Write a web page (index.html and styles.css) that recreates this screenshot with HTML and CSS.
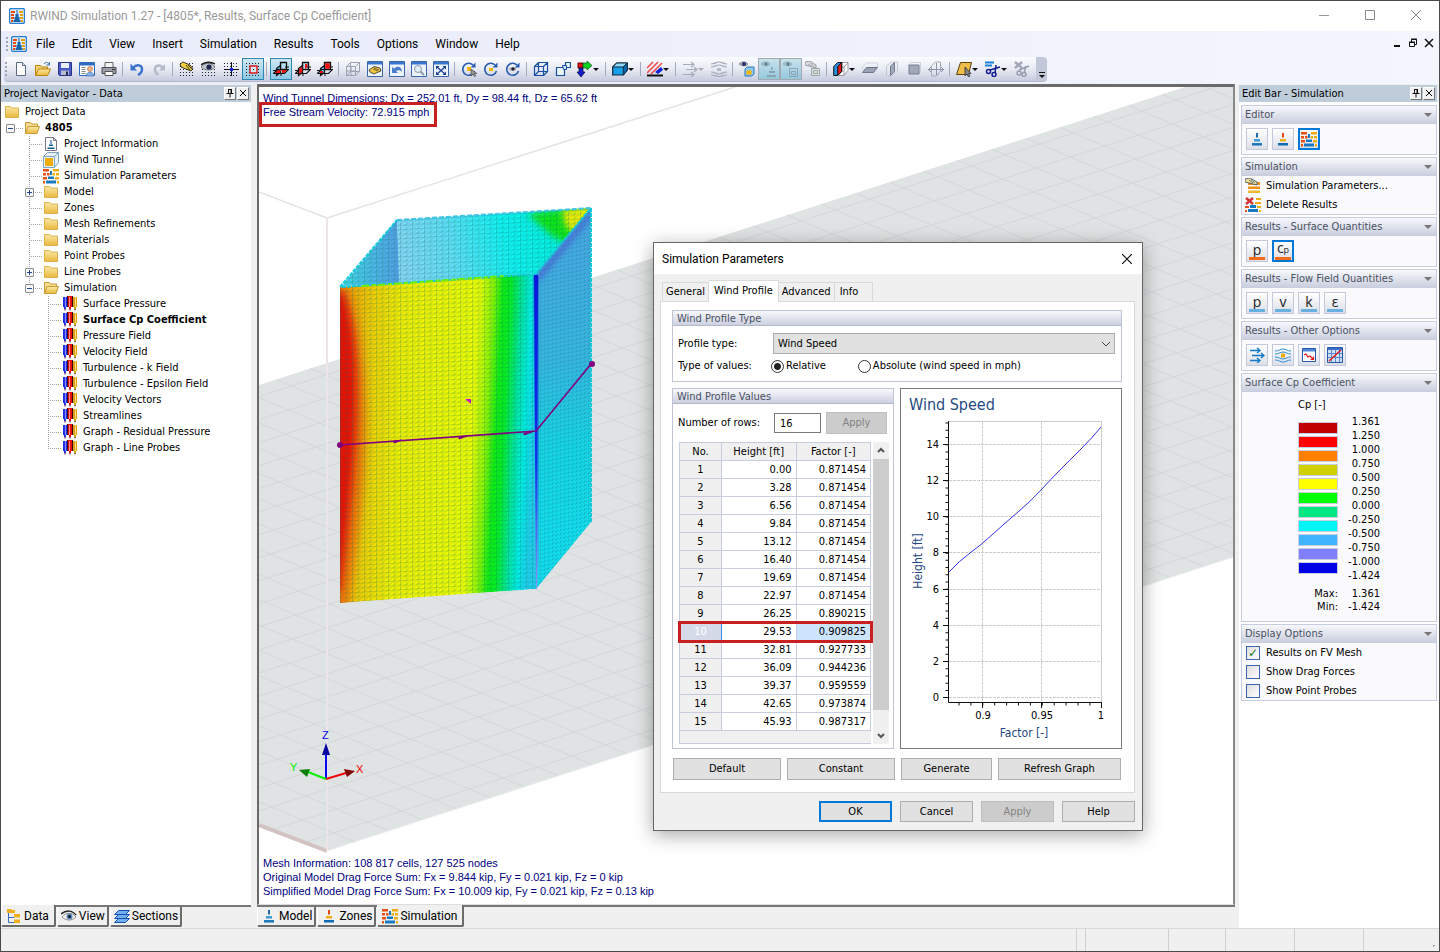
FILE: index.html
```html
<!DOCTYPE html>
<html lang="en">
<head>
	<meta charset="UTF-8">
	<title>RWIND Simulation 1.27</title>
	<link rel="stylesheet" href="styles.css">
</head>
<body>
	<!-- icon sprite -->
	<svg class="sprite" aria-hidden="true">
		<defs>
			<linearGradient id="g-folder" x1="0" y1="0" x2="0" y2="1"><stop offset="0" stop-color="#fdeaa8"/><stop offset="1" stop-color="#e8b83c"/></linearGradient>
			<linearGradient id="g-blue" x1="0" y1="0" x2="0" y2="1"><stop offset="0" stop-color="#4aa8e0"/><stop offset="1" stop-color="#0f6cb4"/></linearGradient>
		</defs>
		<symbol id="i-app" viewBox="0 0 16 16"><rect x=".5" y=".5" width="15" height="15" rx="2" fill="#dcecfa" stroke="#2a7fd0" stroke-width="1.400"/><path d="M2 3h4v2H2zM2 6h3v2H2zM2 9h3v2H2zM2 12h2v2H2z" fill="#e64a10"/><path d="M10 3h4v2h-4zM11 6h3v2h-3zM11 9h3v2h-3zM12 12h2v2h-2z" fill="#e8a000"/><path d="M7.500 2h1v4h1v3h1v3h1v2h-7v-2h1V9h1V6h1z" fill="#1565a8"/></symbol>
		<symbol id="i-new" viewBox="0 0 16 16"><path d="M3.500 1.500h6l3 3v10h-9z" fill="#fff" stroke="#5a6a80"/><path d="M9.500 1.500v3h3" fill="#dde6f0" stroke="#5a6a80"/></symbol>
		<symbol id="i-openfile" viewBox="0 0 16 16"><path d="M.5 14V4.500h5l1 1.500h6v3" fill="#f5d273" stroke="#b8860b"/><path d="M.5 14.500l3-6.500h12l-3 6.500z" fill="url(#g-folder)" stroke="#b8860b"/><path d="M9 3c2-2.500 4-2 5 .500M14.500 1v3h-3" fill="none" stroke="#3a6ea5"/></symbol>
		<symbol id="i-save" viewBox="0 0 16 16"><path d="M1.500 1.500h13v13h-12l-1-1z" fill="#4858c8" stroke="#2a3480"/><path d="M4 2h8v5H4z" fill="#e8eefa"/><path d="M4 9.500h8V14H4z" fill="#b8bccc"/><path d="M9 10.500h2V14H9z" fill="#222a60"/></symbol>
		<symbol id="i-props" viewBox="0 0 16 16"><path d="M.5 1.500h15v13H.5z" fill="#fff" stroke="#2e6ac0"/><path d="M1 2h14v2.500H1z" fill="#2e6ac0"/><path d="M2.500 6.500h4M2.500 8.500h4M2.500 10.500h4M2.500 12.500h4" stroke="#888"/><circle cx="11" cy="8" r="2.500" fill="#f2b48a" stroke="#a4572c" stroke-width=".6"/><path d="M7 15c0-5 8-5 8 0z" fill="#7fb0e8" stroke="#34609c" stroke-width=".6"/></symbol>
		<symbol id="i-print" viewBox="0 0 16 16"><path d="M4 1.500h8V7H4z" fill="#f4f4f4" stroke="#666"/><path d="M1 6.500h14v6H1z" fill="#9a9da4" stroke="#4a4d55"/><path d="M4 10.500h8v4H4z" fill="#fff" stroke="#555"/><path d="M11 8.500h3" stroke="#333"/></symbol>
		<symbol id="i-undo" viewBox="0 0 16 16"><path d="M4 7c4-4.500 9.500-3 9 2-.3 2.500-1.800 4-4 5" fill="none" stroke="#3a72d0" stroke-width="2.400"/><path d="M1.500 2.500v7h6.500z" fill="#3a72d0"/></symbol>
		<symbol id="i-redo" viewBox="0 0 16 16"><path d="M12 6.500C8 3 3.500 4.500 4 9c.2 2 1.500 3.500 3.500 4.500" fill="none" stroke="#b4bac8" stroke-width="2.400"/><path d="M14 3v6.500H8z" fill="#b4bac8"/></symbol>
		<symbol id="i-dots" viewBox="0 0 16 16"><path d="M1 2.500h15M1 5.500h15M1 8.500h15M1 11.500h15M1 14.500h15" stroke="#223" stroke-dasharray="1 2"/></symbol>
		<symbol id="i-snap" viewBox="0 0 16 16"><use href="#i-dots"/><path d="M1 3l3-2 7 3 3 4-2 2-5-2-5-2z" fill="#f0d040" stroke="#111" stroke-width=".8"/><path d="M9 4l4 4M7 4l4 5" stroke="#111" stroke-width=".8"/></symbol>
		<symbol id="i-snapeye" viewBox="0 0 16 16"><use href="#i-dots"/><path d="M0 6c4-5 11-5 14 0-3 4-10 4-14 0z" fill="#c4c8cc" stroke="#555" stroke-width=".7"/><path d="M0 4c4-3.500 10-3.500 14-1" stroke="#222" stroke-width="1.400" fill="none"/><circle cx="8" cy="6" r="2.600" fill="#1c2450"/></symbol>
		<symbol id="i-snapcross" viewBox="0 0 16 16"><use href="#i-dots"/><path d="M8.500 1v14M1 8.500h15" stroke="#111"/><path d="M7 7h3v3H7z" fill="#1020e0"/></symbol>
		<symbol id="i-snapbox" viewBox="0 0 16 16"><use href="#i-dots"/><path d="M5 5h7v7H5z" fill="#d2e8f4" stroke="#e01818" stroke-width="1.400"/><path d="M8 8h1v1H8z" fill="#111"/></symbol>
		<symbol id="i-planes" viewBox="0 0 16 16"><path d="M7.500 1.500h6v7h-6z" fill="#b8e0f4" stroke="#111" stroke-width="1.300"/><path d="M3.500 7.500l4-3v7l-4 3z" fill="#60c0ec" stroke="#111" stroke-width="1.300"/><path d="M.5 12.500l4-4h11l-4 4z" fill="none" stroke="#111" stroke-width="1.200"/><path d="M0 9.500h4M12 6h4M8 12v3" stroke="#111"/></symbol>
		<symbol id="i-plane1" viewBox="0 0 16 16"><use href="#i-planes"/><path d="M2 12l3-3h3l-1 3zM9 9h5l-3 3H9z" fill="#f01010"/></symbol>
		<symbol id="i-plane2" viewBox="0 0 16 16"><use href="#i-planes"/><path d="M4.200 8l3-2.200V11l-3 2.300zM10 3h2.500v3L10 8z" fill="#f01010"/></symbol>
		<symbol id="i-plane3" viewBox="0 0 16 16"><use href="#i-planes"/><path d="M8.200 2.200h4.600v5.600H8.200zM3 10h3v2H3z" fill="#f01010"/></symbol>
		<symbol id="i-wiregrey" viewBox="0 0 16 16"><path d="M1.500 5.500h9v9h-9zM5.500 1.500h9v9h-9zM1.500 5.500l4-4M10.500 5.500l4-4M1.500 14.500l4-4M10.500 14.500l4-4M1.500 10h9M6 5.500v9" fill="none" stroke="#9ba2b2"/></symbol>
		<symbol id="i-wire" viewBox="0 0 16 16"><path d="M1.500 5.500h9v9h-9zM5.500 1.500h9v9h-9zM1.500 5.500l4-4M10.500 5.500l4-4M1.500 14.500l4-4M10.500 14.500l4-4" fill="none" stroke="#1a4fa0" stroke-width="1.200"/></symbol>
		<symbol id="i-win" viewBox="0 0 16 16"><path d="M.5.500h15v15H.5z" fill="#eef4fc" stroke="#3c66a8"/><path d="M1 1h14v2.500H1z" fill="#3a78d0"/></symbol>
		<symbol id="i-winhand" viewBox="0 0 16 16"><use href="#i-win"/><path d="M2 9l5-3.500 6 1.500 1 3-5 2-2 1-4-2z" fill="#f0c840" stroke="#2a2a2a" stroke-width=".8"/><path d="M6 8l5 2M7 7l5 2" stroke="#2a2a2a" stroke-width=".6"/></symbol>
		<symbol id="i-winback" viewBox="0 0 16 16"><use href="#i-win"/><path d="M3 6v6h6l-2-2c2.500-1.500 4.500-1 6 1 0-5-4-7-8-3.500z" fill="#4c7cd0"/></symbol>
		<symbol id="i-winzoom" viewBox="0 0 16 16"><use href="#i-win"/><circle cx="7" cy="8" r="3.500" fill="#dff0f8" stroke="#9098a8"/><path d="M9.500 10.500l3.500 3.500" stroke="#9098a8" stroke-width="2"/></symbol>
		<symbol id="i-winfit" viewBox="0 0 16 16"><use href="#i-win"/><path d="M4 6l8 7M12 6l-8 7" stroke="#1a3f90" stroke-width="1.200"/><path d="M3 5h3.500L3 8.500zM13 5v3.500L9.500 5zM3 14v-3.500L6.500 14zM13 14H9.500l3.500-3.500z" fill="#1a3f90"/></symbol>
		<symbol id="i-rot" viewBox="0 0 16 16"><path d="M13.500 10A6 6 0 1 1 12 4" fill="none" stroke="#2a5cb0" stroke-width="1.600"/><path d="M14.500 1.500v5h-5z" fill="#2a5cb0"/></symbol>
		<symbol id="i-rot1" viewBox="0 0 16 16"><use href="#i-rot"/><path d="M6 6h4v4H6z" fill="#f5b400"/><path d="M10 8v7l2-2 1.500 2.500 1-.5-1-2.500h2.300z" fill="#999" stroke="#333" stroke-width=".6"/></symbol>
		<symbol id="i-rot2" viewBox="0 0 16 16"><use href="#i-rot"/><path d="M6 7h4v3H6z" fill="#f5b400"/></symbol>
		<symbol id="i-rot3" viewBox="0 0 16 16"><use href="#i-rot"/><path d="M3.500 8c2-2.500 6-2.500 8 0-2 2-6 2-8 0z" fill="#aab"/><circle cx="8" cy="8" r="1.700" fill="#223"/></symbol>
		<symbol id="i-boxes" viewBox="0 0 16 16"><path d="M1.500 6.500h8v8h-8zM10.500 1.500h5v5h-5z" fill="#eaf4fc" stroke="#1a4fa0" stroke-width="1.200"/><path d="M7.500 4.500h4v4h-3z" fill="#cfe8f8" stroke="#1a4fa0"/></symbol>
		<symbol id="i-axes" viewBox="0 0 16 16"><path d="M1 2h5v5H1z" fill="#e01010" stroke="#600"/><path d="M6 2h4V0l5 4.500L10 9V7H6z" fill="#10d020" stroke="#052" stroke-width=".7"/><path d="M2 7h4v4h2l-4 5-4-5h2z" fill="#1020d0" stroke="#003" stroke-width=".7"/></symbol>
		<symbol id="i-cube" viewBox="0 0 16 16"><path d="M.7 6l4-4h10.600v7l-4 5H.700z" fill="#1aa0e8" stroke="#10283c" stroke-width="1.200"/><path d="M.7 6h10.600l4-4H4.700z" fill="#8fd8fa" stroke="#10283c"/><path d="M11.300 6l4-4v7l-4 5z" fill="#0a68b0" stroke="#10283c"/></symbol>
		<symbol id="i-hatch" viewBox="0 0 16 16"><path d="M0 7l6-6M0 12L11 1M4 13L15 2" stroke="#f04848" stroke-width="1.500"/><path d="M8 11l6-5 2 3-5 4z" fill="#1020d8"/><path d="M0 14.500h16" stroke="#111" stroke-width="2"/></symbol>
		<symbol id="i-arrowsgrey" viewBox="0 0 16 16"><path d="M1 3.500h10M4 8.500h10M1 13.500h10M9 1l3 2.500L9 6M12 6l3 2.500-3 2.500M9 11l3 2.500L9 16" fill="none" stroke="#a4aab8" stroke-width="1.200"/></symbol>
		<symbol id="i-flowgrey" viewBox="0 0 16 16"><path d="M0 3c4 0 5-2 8-2s4 2 8 2M0 6c4 0 5-2 8-2s4 2 8 2M0 11c4 0 5 2 8 2s4-2 8-2M0 14c4 0 5 1.500 8 1.500s4-1.500 8-1.500" fill="none" stroke="#a4aab8" stroke-width="1.200"/><path d="M6 7h4v3H6z" fill="#b4bac4"/></symbol>
		<symbol id="i-eyebox" viewBox="0 0 16 16"><path d="M0 3c3-3 7-2.500 9 0-2 2.500-6 2.500-9 0z" fill="#bbb" stroke="#667" stroke-width=".7"/><circle cx="5" cy="3" r="2" fill="#223070"/><path d="M6 8l2-2h7v7l-2 2H6z" fill="#8fc8f0" stroke="#2a78b8"/><path d="M7.500 9.500h5v4h-5z" fill="#f5b400"/></symbol>
		<symbol id="i-eyegrey1" viewBox="0 0 16 16"><path d="M0 3c3-3 7-2.500 9 0-2 2.500-6 2.500-9 0z" fill="#9cc" stroke="#89a" stroke-width=".7"/><circle cx="5" cy="3" r="1.600" fill="#678"/><path d="M10 6h1.500v3H10zM8 10h6v2H8zM6 14h9v2H6z" fill="#8aa4b4"/></symbol>
		<symbol id="i-eyegrey2" viewBox="0 0 16 16"><path d="M0 3c3-3 7-2.500 9 0-2 2.500-6 2.500-9 0z" fill="#9cc" stroke="#89a" stroke-width=".7"/><circle cx="5" cy="3" r="1.600" fill="#678"/><path d="M6.500 7.500h8v8h-8zM8.500 10.500h4v3h-4z" fill="none" stroke="#8aa4b4"/></symbol>
		<symbol id="i-handgrey" viewBox="0 0 16 16"><path d="M0 1l5-1 6 4v3L4 5 0 4z" fill="#ddd" stroke="#889" stroke-width=".8"/><path d="M3 3l4 3M5 2l4 3" stroke="#889" stroke-width=".7"/><path d="M6.500 7.500h8v7h-8zM8.500 9.500h4v3h-4z" fill="#ddd" stroke="#9aa"/></symbol>
		<symbol id="i-clip" viewBox="0 0 16 16"><path d="M9 1.500h6v8l-4 5H6M11 14V6l4-4M11 6H9" fill="#fff" stroke="#999"/><path d="M.7 5.500l4-4h4v9l-4 4h-4z" fill="#2a90e0" stroke="#111"/><path d="M4.700 5.500l4-4v9l-4 4z" fill="#e81818" stroke="#111"/></symbol>
		<symbol id="i-flat" viewBox="0 0 16 16"><path d="M.5 11.500l4-5h11l-4 5z" fill="#9aa2b4" stroke="#6c7488"/><path d="M.5 9V6l4-4h11v4" fill="none" stroke="#ccd2dc"/></symbol>
		<symbol id="i-vert" viewBox="0 0 16 16"><path d="M2.500 5l5-4h6v9l-5 5h-6z" fill="none" stroke="#c2c8d2"/><path d="M6.500 5l4-3.500v9l-4 4z" fill="#a2aaba" stroke="#747c90"/></symbol>
		<symbol id="i-front" viewBox="0 0 16 16"><path d="M1.500 4.500l3-3h10v9l-3 3" fill="none" stroke="#ccd2dc"/><path d="M3 4h10v9H3z" fill="#a2aaba" stroke="#747c90"/></symbol>
		<symbol id="i-side" viewBox="0 0 16 16"><path d="M3.500 5l4-4h5v9l-4 5h-5z" fill="none" stroke="#a2aaba"/><path d="M0 8.500h16M3 6l-2.500 2.500L3 11M13 6l2.500 2.500L13 11M8.500 2v12" fill="none" stroke="#8a92a4"/></symbol>
		<symbol id="i-select" viewBox="0 0 16 16"><path d="M.5 13.500l4-12h11l-3 12z" fill="#eebc48" stroke="#5a4410"/><path d="M9 6v9l2-2 1.500 3 1.500-1-1.500-2.500H15z" fill="#888" stroke="#222" stroke-width=".7"/></symbol>
		<symbol id="i-cut" viewBox="0 0 16 16"><path d="M0 1.500h9M0 4.500h7" stroke="#1a80e0" stroke-width="1.800"/><path d="M5 9l10-3M10 12l1-8" stroke="#101a90" stroke-width="1.500"/><circle cx="3.500" cy="10.500" r="2" fill="none" stroke="#101a90" stroke-width="1.500"/><circle cx="9" cy="13.500" r="2" fill="none" stroke="#101a90" stroke-width="1.500"/></symbol>
		<symbol id="i-cutgrey" viewBox="0 0 16 16"><path d="M1 1l7 6M8 1L1 7" stroke="#a0a6b4" stroke-width="2.400"/><path d="M5 9l10-4M10 12l2-7" stroke="#969cac" stroke-width="1.500"/><circle cx="5" cy="12" r="2" fill="none" stroke="#969cac" stroke-width="1.500"/><circle cx="10" cy="13.500" r="2" fill="none" stroke="#969cac" stroke-width="1.500"/></symbol>
		<symbol id="i-folder" viewBox="0 0 16 16"><path d="M1.500 13.500v-11h5l1 1.500h7v9.500z" fill="url(#g-folder)" stroke="#dcb04c"/></symbol>
		<symbol id="i-folderopen" viewBox="0 0 16 16"><path d="M1.500 13.500v-11h5l1 1.500h6v3" fill="#f7dc90" stroke="#c89a38"/><path d="M1.500 13.500l2.500-7h11.500l-2.500 7z" fill="url(#g-folder)" stroke="#c89a38"/></symbol>
		<symbol id="i-info" viewBox="0 0 16 16"><path d="M2.500 1.500h8l3 3v10h-11z" fill="#fff" stroke="#778"/><path d="M10.500 1.500v3h3" fill="none" stroke="#778"/><path d="M7.500 4h1v4h-1zM6 8.500h4v1.500H6zM4.500 11.500h7v1.500h-7z" fill="#0f5c94"/></symbol>
		<symbol id="i-tunnel" viewBox="0 0 16 16"><path d="M.5 4.500l4-4h11v10l-4 5H.500z" fill="#e6f0f6" stroke="#7aa4c0"/><path d="M11.500 15.500v-11l4-4M.5 4.500h11" fill="none" stroke="#7aa4c0"/><path d="M2 6h8v8H2z" fill="#f0ac08"/></symbol>
		<symbol id="i-tower" viewBox="0 0 16 16"><path d="M7 2h2v4.500H7z" fill="#1f6cae"/><path d="M5 8h6v2.500H5zM3 12h10v2.500H3z" fill="url(#g-blue)"/></symbol>
		<symbol id="i-zone" viewBox="0 0 16 16"><path d="M7 2h2v4.500H7z" fill="#e64a10"/><path d="M5 8h6v2.500H5z" fill="#eeb010"/><path d="M3 12h10v2.500H3z" fill="#0f6cb4"/></symbol>
		<symbol id="i-params" viewBox="0 0 16 16"><path d="M0 1h6v2.500H0zM0 5h3v2.500H0zM4 5h2.500v2.500H4zM0 9h4v2.500H0zM0 13h2v2.500H0z" fill="#e65010"/><path d="M10 1h6v2.500h-6zM9.500 5H12v2.500H9.500zM13 5h3v2.500h-3zM12 9h4v2.500h-4zM14 13h2v2.500h-2z" fill="#eeac10"/><path d="M7 3h2v4H7zM5 8.500h6V11H5zM3 12.500h10v3H3z" fill="#1878c0"/></symbol>
		<symbol id="i-pens" viewBox="0 0 16 16"><path d="M1 1h4v10H4v2H2v-2H1z" fill="#2030f0"/><path d="M3 1h1v10H3z" fill="#8890ff"/><path d="M6 0h4v11H9v2H7v-2H6z" fill="#e81010"/><path d="M7 1h1v10H7z" fill="#ff9090"/><path d="M11 1h4v10h-1v2h-2v-2h-1z" fill="#e0a010"/><path d="M13 1h1v10h-1z" fill="#f8dc80"/><path d="M5 0h1v11H5zM10 0h1v11h-1zM2.500 13h1v1.500h-1zM7.500 13h1v1.500h-1zM12.500 13h1v1.500h-1z" fill="#300820"/></symbol>
		<symbol id="i-tree" viewBox="0 0 16 16"><path d="M2.500 5v9.500H9M2.500 9.500H8" fill="none" stroke="#3a6ec0"/><path d="M1 1h4l1 1h3v3H1zM8 6h6v3.500H8zM8 11.500h6V15H8z" fill="#eeb020"/></symbol>
		<symbol id="i-eye" viewBox="0 0 16 16"><path d="M1 9c4-5 10-5 14 0-4 4-10 4-14 0z" fill="#f2f2f2" stroke="#777" stroke-width=".8"/><path d="M0 6c5-4 11-4 15 1" fill="none" stroke="#222" stroke-width="1.500"/><circle cx="8.500" cy="8.500" r="3" fill="#5888c0"/><circle cx="8.500" cy="8.500" r="1.500" fill="#111"/></symbol>
		<symbol id="i-sections" viewBox="0 0 16 16"><path d="M.5 14.500l4-4h11l-4 4zM.5 10.500l4-4h11l-4 4zM.5 6.500l4-4h11l-4 4z" fill="#70b0f0" stroke="#184fb0"/></symbol>
		<symbol id="i-editparams" viewBox="0 0 16 16"><path d="M3 4h12v3H3zM3 8.500h12V11H3z" fill="#f09018"/><path d="M3 12.500h12V15H3z" fill="#f0b830"/><path d="M0 1l5-1 7 4v3L4 5 0 4z" fill="#f8e08c" stroke="#284a80" stroke-width=".8"/><path d="M4 2l4 3M6 1.500l4 3.500" stroke="#284a80" stroke-width=".7"/></symbol>
		<symbol id="i-delete" viewBox="0 0 16 16"><path d="M11 1h5v2h-5zM10 5h6v2h-6zM12 9h4v2h-4zM14 13h2v2h-2z" fill="#eeac10"/><path d="M0 9h4v2H0zM0 13h2v2H0z" fill="#e65010"/><path d="M5 8h6v3H5zM3 12h10v3H3z" fill="#1878c0"/><path d="M1 1l7 6M8 1L1 7" stroke="#d03838" stroke-width="2.600"/></symbol>
		<symbol id="i-vectors" viewBox="0 0 16 16"><path d="M1 3.500h10M3 8.500h11M1 13.500h10M8 1l3 2.500L8 6M12 6l3 2.500-3 2.500M8 11l3 2.500L8 16" fill="none" stroke="#1478c8" stroke-width="1.400"/></symbol>
		<symbol id="i-flow" viewBox="0 0 16 16"><path d="M0 4c4 0 5-2 8-2s4 2 8 2M0 7c4 0 5-2 8-2s4 2 8 2M0 10c4 0 5 2 8 2s4-2 8-2M0 13c4 0 5 2 8 2s4-2 8-2" fill="none" stroke="#3090d8"/><path d="M6 6.500h4v4H6z" fill="#f0a808"/></symbol>
		<symbol id="i-residual" viewBox="0 0 16 16"><path d="M1.500 1.500h13v13h-13z" fill="#fff" stroke="#2a58a8"/><path d="M2 2h12v2.500H2z" fill="#4c86d8"/><path d="M3 8l2-1 2 3 2-1 3 3M12.500 9.500v3h-3" fill="none" stroke="#e01818" stroke-width="1.200"/></symbol>
		<symbol id="i-probe" viewBox="0 0 16 16"><path d="M.5.500h15v15H.500z" fill="#cfe0f4" stroke="#2a58a8"/><path d="M1 1h14v2H1z" fill="#3c70c8"/><path d="M4.500 3v12M8.500 3v12M12.500 3v12M1 6.500h14M1 10.500h14" stroke="#5a88d0"/><path d="M2 14L14 3" stroke="#e01818" stroke-width="1.400"/></symbol>
		<symbol id="i-pin" viewBox="0 0 10 10"><path d="M1.500 5.500h7M3.500 1v4.500M3 1.500h4M6 1v4.500M6.500 1v4.500M5 6v3.500" fill="none" stroke="#111"/></symbol>
		<symbol id="i-x" viewBox="0 0 10 10"><path d="M2 2l6 6M8 2L2 8" stroke="currentColor" fill="none"/></symbol>
	</svg>

	<header class="titlebar">
		<svg class="icon"><use href="#i-app"/></svg>
		<h1>RWIND Simulation 1.27 - [4805*, Results, Surface Cp Coefficient]</h1>
		<div class="caption">
			<button aria-label="Minimize"><svg viewBox="0 0 10 10"><path d="M0 5.500h10" stroke="#999"/></svg></button>
			<button aria-label="Maximize"><svg viewBox="0 0 10 10"><path d="M.5.500h9v9h-9z" fill="none" stroke="#888"/></svg></button>
			<button aria-label="Close"><svg viewBox="0 0 10 10"><path d="M0 0l10 10M10 0L0 10" stroke="#888"/></svg></button>
		</div>
	</header>

	<div class="bars">
		<nav class="menubar">
			<span class="grip"></span>
			<svg class="icon"><use href="#i-app"/></svg>
			<ul>
				<li><a href="#">File</a></li>
				<li><a href="#">Edit</a></li>
				<li><a href="#">View</a></li>
				<li><a href="#">Insert</a></li>
				<li><a href="#">Simulation</a></li>
				<li><a href="#">Results</a></li>
				<li><a href="#">Tools</a></li>
				<li><a href="#">Options</a></li>
				<li><a href="#">Window</a></li>
				<li><a href="#">Help</a></li>
			</ul>
			<div class="mdi">
				<button aria-label="Minimize document"><svg viewBox="0 0 10 10"><path d="M2 8h6" stroke="#111" stroke-width="2"/></svg></button>
				<button aria-label="Restore document"><svg viewBox="0 0 10 10"><path d="M1.500 4.500h5v4h-5zM3.500 4V1.500h5v5H7M1 4h6M3 1h6" fill="none" stroke="#111"/></svg></button>
				<button aria-label="Close document"><svg viewBox="0 0 10 10"><path d="M1 1l8 8M9 1L1 9" stroke="#111" stroke-width="1.500"/></svg></button>
			</div>
		</nav>
		<div class="toolbar" role="toolbar">
			<span class="grip"></span>
			<button aria-label="New"><svg class="icon"><use href="#i-new"/></svg></button>
			<button aria-label="Open"><svg class="icon"><use href="#i-openfile"/></svg></button>
			<button aria-label="Save"><svg class="icon"><use href="#i-save"/></svg></button>
			<button aria-label="Properties"><svg class="icon"><use href="#i-props"/></svg></button>
			<button aria-label="Print"><svg class="icon"><use href="#i-print"/></svg></button>
			<span class="sep"></span>
			<button aria-label="Undo"><svg class="icon"><use href="#i-undo"/></svg></button>
			<button aria-label="Redo"><svg class="icon"><use href="#i-redo"/></svg></button>
			<span class="sep"></span>
			<button aria-label="Edit grid"><svg class="icon"><use href="#i-snap"/></svg></button>
			<button aria-label="Show grid"><svg class="icon"><use href="#i-snapeye"/></svg></button>
			<button aria-label="Origin"><svg class="icon"><use href="#i-snapcross"/></svg></button>
			<button class="on" aria-label="Snap"><svg class="icon"><use href="#i-snapbox"/></svg></button>
			<span class="sep"></span>
			<button class="on" aria-label="Plane XY"><svg class="icon"><use href="#i-plane1"/></svg></button>
			<button aria-label="Plane YZ"><svg class="icon"><use href="#i-plane2"/></svg></button>
			<button aria-label="Plane XZ"><svg class="icon"><use href="#i-plane3"/></svg></button>
			<span class="sep"></span>
			<button aria-label="Mesh"><svg class="icon"><use href="#i-wiregrey"/></svg></button>
			<button aria-label="Edit view"><svg class="icon"><use href="#i-winhand"/></svg></button>
			<button aria-label="Previous view"><svg class="icon"><use href="#i-winback"/></svg></button>
			<button aria-label="Zoom"><svg class="icon"><use href="#i-winzoom"/></svg></button>
			<button aria-label="Fit"><svg class="icon"><use href="#i-winfit"/></svg></button>
			<span class="sep"></span>
			<button aria-label="Rotate"><svg class="icon"><use href="#i-rot1"/></svg></button>
			<button aria-label="Rotate about point"><svg class="icon"><use href="#i-rot2"/></svg></button>
			<button aria-label="Rotate view"><svg class="icon"><use href="#i-rot3"/></svg></button>
			<span class="sep"></span>
			<button aria-label="Isometric"><svg class="icon"><use href="#i-wire"/></svg></button>
			<button aria-label="Perspective"><svg class="icon"><use href="#i-boxes"/></svg></button>
			<button class="dd" aria-label="View axis"><svg class="icon"><use href="#i-axes"/></svg></button>
			<span class="sep"></span>
			<button class="dd" aria-label="Solid"><svg class="icon"><use href="#i-cube"/></svg></button>
			<span class="sep"></span>
			<button class="dd" aria-label="Colors"><svg class="icon"><use href="#i-hatch"/></svg></button>
			<span class="sep"></span>
			<button class="dd dim" aria-label="Vectors"><svg class="icon"><use href="#i-arrowsgrey"/></svg></button>
			<button aria-label="Streamlines"><svg class="icon"><use href="#i-flowgrey"/></svg></button>
			<span class="sep"></span>
			<button aria-label="Show tunnel"><svg class="icon"><use href="#i-eyebox"/></svg></button>
			<button class="on dim" aria-label="Show model"><svg class="icon"><use href="#i-eyegrey1"/></svg></button>
			<button class="on dim" aria-label="Show zones"><svg class="icon"><use href="#i-eyegrey2"/></svg></button>
			<button aria-label="Edit zones"><svg class="icon"><use href="#i-handgrey"/></svg></button>
			<span class="sep"></span>
			<button class="dd" aria-label="Clipping plane"><svg class="icon"><use href="#i-clip"/></svg></button>
			<button aria-label="Horizontal clip"><svg class="icon"><use href="#i-flat"/></svg></button>
			<button aria-label="Vertical clip"><svg class="icon"><use href="#i-vert"/></svg></button>
			<button aria-label="Front clip"><svg class="icon"><use href="#i-front"/></svg></button>
			<button aria-label="Move clip"><svg class="icon"><use href="#i-side"/></svg></button>
			<span class="sep"></span>
			<button class="dd" aria-label="Select"><svg class="icon"><use href="#i-select"/></svg></button>
			<button class="dd" aria-label="Slicer"><svg class="icon"><use href="#i-cut"/></svg></button>
			<button aria-label="Delete slicer"><svg class="icon"><use href="#i-cutgrey"/></svg></button>
			<button class="more" aria-label="More buttons"><svg viewBox="0 0 8 8"><path d="M1 1.500h6" stroke="#111"/><path d="M1 4h6L4 7z" fill="#111"/></svg></button>
		</div>
	</div>

	<main class="work">
		<aside class="dock navigator">
			<div class="dock-title">
				<h2>Project Navigator - Data</h2>
				<button aria-label="Pin navigator"><svg><use href="#i-pin"/></svg></button>
				<button aria-label="Close navigator"><svg><use href="#i-x"/></svg></button>
			</div>
			<div class="tree">
				<div class="root"><svg class="icon"><use href="#i-folder"/></svg>Project Data</div>
				<ul>
					<li><div class="row"><button class="toggle" aria-label="Collapse"></button><svg class="icon"><use href="#i-folderopen"/></svg><b>4805</b></div>
						<ul>
							<li><div class="row"><svg class="icon"><use href="#i-info"/></svg>Project Information</div></li>
							<li><div class="row"><svg class="icon"><use href="#i-tunnel"/></svg>Wind Tunnel</div></li>
							<li><div class="row"><svg class="icon"><use href="#i-params"/></svg>Simulation Parameters</div></li>
							<li><div class="row"><button class="toggle plus" aria-label="Expand"></button><svg class="icon"><use href="#i-folder"/></svg>Model</div></li>
							<li><div class="row"><svg class="icon"><use href="#i-folder"/></svg>Zones</div></li>
							<li><div class="row"><svg class="icon"><use href="#i-folder"/></svg>Mesh Refinements</div></li>
							<li><div class="row"><svg class="icon"><use href="#i-folder"/></svg>Materials</div></li>
							<li><div class="row"><svg class="icon"><use href="#i-folder"/></svg>Point Probes</div></li>
							<li><div class="row"><button class="toggle plus" aria-label="Expand"></button><svg class="icon"><use href="#i-folder"/></svg>Line Probes</div></li>
							<li><div class="row"><button class="toggle" aria-label="Collapse"></button><svg class="icon"><use href="#i-folderopen"/></svg>Simulation</div>
								<ul>
									<li><div class="row"><svg class="icon"><use href="#i-pens"/></svg>Surface Pressure</div></li>
									<li><div class="row"><svg class="icon"><use href="#i-pens"/></svg><b>Surface Cp Coefficient</b></div></li>
									<li><div class="row"><svg class="icon"><use href="#i-pens"/></svg>Pressure Field</div></li>
									<li><div class="row"><svg class="icon"><use href="#i-pens"/></svg>Velocity Field</div></li>
									<li><div class="row"><svg class="icon"><use href="#i-pens"/></svg>Turbulence - k Field</div></li>
									<li><div class="row"><svg class="icon"><use href="#i-pens"/></svg>Turbulence - Epsilon Field</div></li>
									<li><div class="row"><svg class="icon"><use href="#i-pens"/></svg>Velocity Vectors</div></li>
									<li><div class="row"><svg class="icon"><use href="#i-pens"/></svg>Streamlines</div></li>
									<li><div class="row"><svg class="icon"><use href="#i-pens"/></svg>Graph - Residual Pressure</div></li>
									<li><div class="row"><svg class="icon"><use href="#i-pens"/></svg>Graph - Line Probes</div></li>
								</ul>
							</li>
						</ul>
					</li>
				</ul>
			</div>
			<div class="tabs">
				<button class="active"><svg class="icon"><use href="#i-tree"/></svg>Data</button>
				<button><svg class="icon"><use href="#i-eye"/></svg>View</button>
				<button><svg class="icon"><use href="#i-sections"/></svg>Sections</button>
			</div>
		</aside>

		<section class="center">
			<div class="view">
				<svg class="scene" viewBox="259 87 974 818" preserveAspectRatio="xMinYMin slice">
					<defs>
						<pattern id="floor" width="10" height="10" patternUnits="userSpaceOnUse" patternTransform="matrix(3.4 -1.1 3.1 1.3 259 385)"><path d="M0 5H10M5 0V10" stroke="#d4d7d9" stroke-width=".4"/></pattern>
						<pattern id="mesh" width="12" height="9" patternUnits="userSpaceOnUse" patternTransform="translate(340 287) skewY(-3.500)"><path d="M0 .5h12M0 5h12M.5 0v9M6.500 0v9M0 9L12 0M0 4.500L6 0M6 9l6-4.500" fill="none" stroke="#0a6a60" stroke-width=".5" opacity=".42"/></pattern>
						<pattern id="meshside" width="4" height="4" patternUnits="userSpaceOnUse" patternTransform="translate(536 275) skewY(-50)"><path d="M0 .5h4M.5 0v4M0 0l4 4" fill="none" stroke="#086a80" stroke-width=".5" opacity=".36"/></pattern>
						<linearGradient id="front" gradientUnits="userSpaceOnUse" x1="340" y1="430" x2="534" y2="440">
							<stop offset="0" stop-color="#f8a000"/><stop offset=".14" stop-color="#f4d000"/><stop offset=".3" stop-color="#f4f000"/><stop offset=".68" stop-color="#f0ff00"/><stop offset=".75" stop-color="#90f800"/><stop offset=".8" stop-color="#10f010"/><stop offset=".84" stop-color="#04f020"/><stop offset=".9" stop-color="#00e8a0"/><stop offset=".95" stop-color="#00f0e8"/><stop offset="1" stop-color="#20d0f0"/>
						</linearGradient>
						<linearGradient id="side" gradientUnits="userSpaceOnUse" x1="550" y1="250" x2="575" y2="530"><stop offset="0" stop-color="#4aaee8"/><stop offset=".4" stop-color="#3abce6"/><stop offset=".7" stop-color="#18dcea"/><stop offset="1" stop-color="#14e4f2"/></linearGradient>
						<linearGradient id="edge" gradientUnits="userSpaceOnUse" x1="0" y1="275" x2="0" y2="589"><stop offset="0" stop-color="#0818d8"/><stop offset=".6" stop-color="#1030e8"/><stop offset="1" stop-color="#8898f4"/></linearGradient>
						<linearGradient id="back" gradientUnits="userSpaceOnUse" x1="400" y1="260" x2="575" y2="215"><stop offset="0" stop-color="#88d8f8"/><stop offset=".3" stop-color="#60e0f8"/><stop offset=".6" stop-color="#10f4f4"/><stop offset="1" stop-color="#00f0d8"/></linearGradient>
						<linearGradient id="inner" x1="0" y1="0" x2="1" y2="0"><stop offset="0" stop-color="#40d8e8"/><stop offset="1" stop-color="#569ee8"/></linearGradient>
						<filter id="blur" x="-40%" y="-20%" width="180%" height="140%"><feGaussianBlur stdDeviation="5"/></filter>
						<filter id="soft" x="-20%" y="-20%" width="140%" height="140%"><feGaussianBlur stdDeviation="3"/></filter>
						<clipPath id="frontclip"><path d="M340 287L536 273V589L340 603z"/></clipPath>
						<clipPath id="backclip"><path d="M397 220L591 208L536 273L399 284z"/></clipPath>
						<clipPath id="sideclip"><path d="M536 273L591 208V522L536 589z"/></clipPath>
					</defs>
					<!-- tunnel floor -->
					<path d="M259 385L1185 87H1240V555L327 851L259 824z" fill="#e0e3e3"/>
					<path d="M259 385L1185 87H1240V555L327 851L259 824z" fill="url(#floor)"/>
					<path d="M259 192L327 218M327 218L735 87" stroke="#e6e4e4" stroke-width="1.500" fill="none"/>
					<path d="M259 825L327 851" stroke="#d2c2c2" stroke-width="4"/>
					<path d="M327 851L1240 555" stroke="#eef0f0"/>
					<!-- inside of the roofless building -->
					<path d="M342 286L397 220L400 284z" fill="url(#inner)"/>
					<path d="M397 220L591 208L536 273L399 284z" fill="url(#back)"/>
					<g clip-path="url(#backclip)">
						<path d="M528 214L600 204L572 246L552 236z" fill="#10e818" filter="url(#soft)"/>
						<path d="M562 210L600 204L575 236L565 224z" fill="#f0f000" filter="url(#soft)"/>
					</g>
					<path d="M342 286L397 220L591 208L536 273L399 284z" fill="url(#mesh)"/>
					<!-- windward wall -->
					<g clip-path="url(#frontclip)">
						<path d="M340 287L536 273V589L340 603z" fill="url(#front)"/>
						<path d="M320 284H346C360 320 367 370 365 440S354 560 346 620H320z" fill="#f87000" filter="url(#blur)"/>
						<path d="M320 292H343C354 320 357 360 356 410S348 530 340 590H320z" fill="#f00800" filter="url(#soft)"/>
						<path d="M340 287L536 273V589L340 603z" fill="url(#mesh)"/>
					</g>
					<!-- side wall -->
					<path d="M536 273L591 208V522L536 589z" fill="url(#side)"/>
					<g clip-path="url(#sideclip)">
						<path d="M536 280L591 214" stroke="#5060dc" stroke-width="5" filter="url(#soft)"/>
					</g>
					<path d="M536 273L591 208V522L536 589z" fill="url(#meshside)"/>
					<path d="M533 276h6V560L537 589h-1z" fill="url(#edge)" opacity=".35"/>
					<path d="M534 275h4L537 589h-1z" fill="url(#edge)"/>
					<path d="M340 287L397 220M536 274L590 209M591 208V522M342 287L536 274" stroke="#14c8d8" stroke-width="2" stroke-dasharray="4 1" fill="none"/>
					<path d="M397 220L591 208" stroke="#40c4e8" stroke-dasharray="5 2" stroke-width="2"/>
					<path d="M362 286L505 276" stroke="#70f000" stroke-dasharray="7 3 4 2" stroke-width="2"/>
					<!-- line probe -->
					<path d="M340 445L536 431L591 364" stroke="#800080" stroke-width="1.600" fill="none"/>
					<circle cx="340" cy="445" r="3" fill="#800080"/><circle cx="592" cy="364" r="3" fill="#800080"/>
					<path d="M402 440l-8 3v-2zM467 436l-8 3v-2zM532 432l-8 3v-2z" stroke="#800080" fill="#800080"/>
					<path d="M465 399h6v5z" fill="#c818c0"/>
					<path d="M327 218V851" stroke="#ece5e7" stroke-width="2"/>
					<!-- axes -->
					<path d="M326 779V752" stroke="#0808f0" stroke-width="2"/><path d="M326 743l4 12h-8z" fill="#0808a0"/>
					<path d="M326 779l20-6" stroke="#f00808" stroke-width="2"/><path d="M355 771l-11-2 3 8z" fill="#800404"/>
					<path d="M326 779l-18-7" stroke="#08f008" stroke-width="2"/><path d="M299 770l11-1-3 8z" fill="#088008"/>
					<g class="axis"><text x="322" y="739" fill="#0000f0">Z</text><text x="290" y="771" fill="#00f000">Y</text><text x="356" y="773" fill="#f00000">X</text></g>
				</svg>
				<div class="readout">
					<p>Wind Tunnel Dimensions: Dx = 252.01 ft, Dy = 98.44 ft, Dz = 65.62 ft</p>
					<p class="marked">Free Stream Velocity: 72.915 mph</p>
				</div>
				<div class="readout bottom">
					<p>Mesh Information: 108 817 cells, 127 525 nodes</p>
					<p>Original Model Drag Force Sum: Fx = 9.844 kip, Fy = 0.021 kip, Fz = 0 kip</p>
					<p>Simplified Model Drag Force Sum: Fx = 10.009 kip, Fy = 0.021 kip, Fz = 0.13 kip</p>
				</div>

				<div class="dialog" role="dialog" aria-labelledby="dlg-title">
					<div class="dialog-title">
						<h2 id="dlg-title">Simulation Parameters</h2>
						<button aria-label="Close dialog"><svg viewBox="0 0 10 10"><path d="M0 0l10 10M10 0L0 10" stroke="#111" stroke-width="1.200"/></svg></button>
					</div>
					<div class="dialog-tabs" role="tablist">
						<button role="tab">General</button>
						<button role="tab" class="active">Wind Profile</button>
						<button role="tab">Advanced</button>
						<button role="tab" class="last">Info</button>
					</div>
					<div class="page">
						<fieldset class="group">
							<legend>Wind Profile Type</legend>
							<div class="form">
								<label for="ptype">Profile type:</label>
								<select id="ptype"><option>Wind Speed</option></select>
								<span>Type of values:</span>
								<div class="radios">
									<label><input type="radio" name="vals" checked>Relative</label>
									<label><input type="radio" name="vals">Absolute (wind speed in mph)</label>
								</div>
							</div>
						</fieldset>
						<div class="cols">
							<fieldset class="group">
								<legend>Wind Profile Values</legend>
								<div class="rows">
									<label for="nrows">Number of rows:</label>
									<input id="nrows" type="text" value="16">
									<button class="btn" disabled>Apply</button>
								</div>
								<div class="tablebox">
									<div class="tablewrap">
										<table>
											<thead><tr><th class="no">No.</th><th>Height [ft]</th><th>Factor [-]</th></tr></thead>
											<tbody>
												<tr><th>1</th><td>0.00</td><td>0.871454</td></tr>
												<tr><th>2</th><td>3.28</td><td>0.871454</td></tr>
												<tr><th>3</th><td>6.56</td><td>0.871454</td></tr>
												<tr><th>4</th><td>9.84</td><td>0.871454</td></tr>
												<tr><th>5</th><td>13.12</td><td>0.871454</td></tr>
												<tr><th>6</th><td>16.40</td><td>0.871454</td></tr>
												<tr><th>7</th><td>19.69</td><td>0.871454</td></tr>
												<tr><th>8</th><td>22.97</td><td>0.871454</td></tr>
												<tr><th>9</th><td>26.25</td><td>0.890215</td></tr>
												<tr class="sel"><th>10</th><td>29.53</td><td>0.909825</td></tr>
												<tr><th>11</th><td>32.81</td><td>0.927733</td></tr>
												<tr><th>12</th><td>36.09</td><td>0.944236</td></tr>
												<tr><th>13</th><td>39.37</td><td>0.959559</td></tr>
												<tr><th>14</th><td>42.65</td><td>0.973874</td></tr>
												<tr><th>15</th><td>45.93</td><td>0.987317</td></tr>
											</tbody>
										</table>
									</div>
									<div class="scroll">
										<svg viewBox="0 0 16 17"><path d="M5 10l3-3 3 3" fill="none" stroke="#555" stroke-width="2"/></svg>
										<span class="thumb"></span>
										<svg viewBox="0 0 16 17"><path d="M5 7l3 3 3-3" fill="none" stroke="#555" stroke-width="2"/></svg>
									</div>
								</div>
							</fieldset>
							<div class="chart">
								<svg viewBox="0 1 220 359">
									<path d="M47 33.500H200.500V314" fill="none" stroke="#ccc"/>
									<path d="M48 56.500H200M48 92.500H200M48 128.500H200M48 164.500H200M48 201.500H200M48 237.500H200M48 273.500H200M48 309.500H200M81.500 34V314M140.500 34V314" stroke="#ccc" stroke-dasharray="3 1"/>
									<path d="M47.500 33V314.500H201M42 56.500h5M42 92.500h5M42 128.500h5M42 164.500h5M42 201.500h5M42 237.500h5M42 273.500h5M42 309.500h5M81.500 315v5M140.500 315v5M200.500 315v5" fill="none" stroke="#111"/>
									<path d="M46 34.500V309" stroke="#111" stroke-width="3" stroke-dasharray="1 6.230"/>
									<path d="M57.500 316H200" stroke="#111" stroke-width="3" stroke-dasharray="1 10.900"/>
									<path d="M48 184Q58 173 69 165T92 146T117 124T140 102T159 82T180 61T200 39" fill="none" stroke="#3434f0"/>
									<text class="ct" x="8" y="22">Wind Speed</text>
									<g text-anchor="end">
										<text x="38" y="60">14</text><text x="38" y="96">12</text><text x="38" y="132">10</text><text x="38" y="168">8</text><text x="38" y="205">6</text><text x="38" y="241">4</text><text x="38" y="277">2</text><text x="38" y="313">0</text>
									</g>
									<g text-anchor="middle">
										<text x="82" y="331">0.9</text><text x="141" y="331">0.95</text><text x="200" y="331">1</text>
										<text class="cl" x="123" y="349">Factor [-]</text>
										<text class="cl" transform="translate(21 173) rotate(-90)">Height [ft]</text>
									</g>
								</svg>
							</div>
						</div>
						<div class="actions">
							<button class="btn">Default</button>
							<button class="btn">Constant</button>
							<button class="btn">Generate</button>
							<button class="btn">Refresh Graph</button>
						</div>
					</div>
					<div class="foot">
						<button class="btn primary">OK</button>
						<button class="btn">Cancel</button>
						<button class="btn" disabled>Apply</button>
						<button class="btn">Help</button>
					</div>
				</div>
			</div>
			<div class="tabs">
				<button><svg class="icon"><use href="#i-tower"/></svg>Model</button>
				<button><svg class="icon"><use href="#i-zone"/></svg>Zones</button>
				<button class="active"><svg class="icon"><use href="#i-params"/></svg>Simulation</button>
			</div>
		</section>

		<aside class="dock editbar">
			<div class="dock-title">
				<h2>Edit Bar - Simulation</h2>
				<button aria-label="Pin edit bar"><svg><use href="#i-pin"/></svg></button>
				<button aria-label="Close edit bar"><svg><use href="#i-x"/></svg></button>
			</div>
			<div class="panels">
				<section class="panel">
					<h3>Editor</h3>
					<div class="tools">
						<button aria-label="Model"><svg class="icon"><use href="#i-tower"/></svg></button>
						<button aria-label="Zones"><svg class="icon"><use href="#i-zone"/></svg></button>
						<button class="on" aria-label="Simulation"><svg class="icon"><use href="#i-params"/></svg></button>
					</div>
				</section>
				<section class="panel">
					<h3>Simulation</h3>
					<a href="#" class="cmd"><svg class="icon"><use href="#i-editparams"/></svg>Simulation Parameters...</a>
					<a href="#" class="cmd"><svg class="icon"><use href="#i-delete"/></svg>Delete Results</a>
				</section>
				<section class="panel">
					<h3>Results - Surface Quantities</h3>
					<div class="tools letters hot">
						<button>p</button>
						<button class="on"><span>c<small>p</small></span></button>
					</div>
				</section>
				<section class="panel">
					<h3>Results - Flow Field Quantities</h3>
					<div class="tools letters">
						<button>p</button>
						<button>v</button>
						<button>k</button>
						<button>ε</button>
					</div>
				</section>
				<section class="panel">
					<h3>Results - Other Options</h3>
					<div class="tools">
						<button aria-label="Vectors"><svg class="icon"><use href="#i-vectors"/></svg></button>
						<button aria-label="Streamlines"><svg class="icon"><use href="#i-flow"/></svg></button>
						<button aria-label="Residual pressure"><svg class="icon"><use href="#i-residual"/></svg></button>
						<button aria-label="Line probes"><svg class="icon"><use href="#i-probe"/></svg></button>
					</div>
				</section>
				<section class="panel">
					<h3>Surface Cp Coefficient</h3>
					<div class="legend">
						<p class="unit">Cp [-]</p>
						<div class="scale">
							<ul class="swatches">
								<li class="c1"></li><li class="c2"></li><li class="c3"></li><li class="c4"></li><li class="c5"></li><li class="c6"></li><li class="c7"></li><li class="c8"></li><li class="c9"></li><li class="c10"></li><li class="c11"></li>
							</ul>
							<ul class="values">
								<li>1.361</li><li>1.250</li><li>1.000</li><li>0.750</li><li>0.500</li><li>0.250</li><li>0.000</li><li>-0.250</li><li>-0.500</li><li>-0.750</li><li>-1.000</li><li>-1.424</li>
							</ul>
						</div>
						<dl>
							<dt>Max:</dt><dd>1.361</dd>
							<dt>Min:</dt><dd>-1.424</dd>
						</dl>
					</div>
				</section>
				<section class="panel">
					<h3>Display Options</h3>
					<label class="cmd"><input type="checkbox" checked>Results on FV Mesh</label>
					<label class="cmd"><input type="checkbox">Show Drag Forces</label>
					<label class="cmd"><input type="checkbox">Show Point Probes</label>
				</section>
			</div>
		</aside>
	</main>

	<footer class="statusbar">
		<span class="w1"></span><span class="w2"></span><span class="w3"></span><span class="w4"></span><span class="w4"></span><span class="w5"></span>
	</footer>
</body>
</html>
```

FILE: styles.css
```css
* {margin: 0;padding: 0;box-sizing: border-box;}
ul {list-style: none;}
body {height: 100vh;display: flex;flex-direction: column;overflow: hidden;background: #f0f0f0;border: 1px solid #4a4a4a;font: 11px/16px "DejaVu Sans Condensed", "Noto Sans", sans-serif;color: #000;}
button, input, select {font: inherit;color: inherit;}
button {border: 0;background: none;white-space: nowrap;}
h1, h2, h3 {font-size: inherit;font-weight: normal;}
a {color: inherit;text-decoration: none;}
fieldset {border: 0;min-width: 0;}
.sprite {position: absolute;width: 0;height: 0;}
.icon {width: 16px;height: 16px;flex: none;}

/* title and menu */
.titlebar {height: 30px;flex: none;display: flex;align-items: center;gap: 5px;padding-left: 8px;background: #fff;font: 12px/16px Roboto, sans-serif;color: #999;}
.titlebar h1 {flex: 1;}
.caption {display: flex;}
.caption button {width: 46px;height: 30px;}
.caption svg {width: 10px;height: 10px;}
.bars {flex: none;height: 53px;background: linear-gradient(90deg, #e8ebf9, #f3f6fd);}
.menubar {height: 26px;display: flex;align-items: center;padding-left: 4px;font: 12px/16px Roboto, sans-serif;}
.menubar ul {flex: 1;display: flex;padding-left: 1px;}
.menubar a {padding: 0 9px 0 8px;}
.grip {width: 2px;height: 14px;margin: 0 3px 0 1px;background: repeating-linear-gradient(#a0a4b4 0 2px, transparent 2px 4px);}
.mdi {display: flex;padding-right: 2px;}
.mdi button {width: 16px;height: 16px;}
.mdi svg {width: 10px;height: 10px;}

.toolbar {width: 1043px;height: 25px;margin-left: 3px;display: flex;align-items: center;border-radius: 4px;border-bottom: 1px solid #b4b8cc;background: linear-gradient(#fbfcff, #e8ebf4 50%, #c6cbde);}
.toolbar button {width: 22px;height: 22px;flex: none;display: flex;align-items: center;justify-content: center;}
.toolbar .on {border: 1px solid #2f86b4;background: linear-gradient(#cfe8f4, #8cc8e2);}
.toolbar .on.dim {border-color: #a0aab0;background: linear-gradient(#c8e2ec, #94c8dc);}
.toolbar .dd {width: 29px;justify-content: flex-start;padding-left: 3px;}
.toolbar .dd::after {content: "";border: 3px solid transparent;border-top-color: #111;border-bottom: 0;}
.toolbar .dim::after {border-top-color: #aaa;}
.toolbar .sep {width: 1px;height: 14px;margin: 0 3px 0 2px;background: #a4aabc;}
.toolbar .more {width: 11px;height: 24px;align-items: flex-end;padding-bottom: 2px;margin-left: auto;border-radius: 0 4px 4px 0;background: #c2c8da;}
.more svg {width: 8px;height: 8px;}

/* docks */
.work {flex: 1;min-height: 0;display: flex;}
.dock {flex: none;display: flex;flex-direction: column;padding-top: 1px;}
.dock-title {height: 17px;flex: none;display: flex;align-items: center;gap: 1px;padding: 0 2px 0 3px;background: #bfcddb;}
.dock-title h2 {flex: 1;}
.dock-title button {width: 12px;height: 13px;display: flex;background: #f0f0f0;border: 1px solid #fff;border-right-color: #777;border-bottom-color: #777;}
.dock-title svg {width: 10px;height: 10px;}
.navigator {width: 250px;}
.tree {flex: 1;padding: 2px 0 0 5px;background: #fff;}
.root, .row {display: flex;align-items: center;height: 16px;}
.root {gap: 5px;margin-left: -2px;}
.row {gap: 5px;}
.row::before {content: "";width: 13px;height: 1px;margin-left: 4px;margin-right: -4px;background: repeating-linear-gradient(90deg, #a4a4a4 0 1px, transparent 1px 2px);}
.tree .toggle {width: 9px;height: 9px;margin: 0 -4px 0 -18px;border: 1px solid #8c8c8c;border-radius: 1px;background: linear-gradient(#24489c, #24489c) center/5px 1px no-repeat, #f6f6f6;}
.tree .toggle + .icon {margin-left: 8px;}
.tree .plus {background: linear-gradient(#24489c, #24489c) center/5px 1px no-repeat, linear-gradient(#24489c, #24489c) center/1px 5px no-repeat, #f6f6f6;}
.tree ul ul {margin-left: 19px;background: repeating-linear-gradient(#a4a4a4 0 1px, transparent 1px 2px) 4px 0/1px calc(100% - 8px) no-repeat;}
.tree ul ul li:last-child > ul {margin-left: 0;padding-left: 19px;background-color: #fff;background-position: 23px 0;}

.tabs {height: 23px;flex: none;display: flex;align-items: flex-start;border-top: 2px solid #777;font: 12px/16px Roboto, sans-serif;}
.tabs button {height: 20px;display: flex;align-items: center;gap: 2px;padding: 0 2px 0 3px;margin-right: 1px;border: solid #6c6c6c;border-width: 0 2px 2px 0;border-left: 1px solid #fff;border-radius: 0 0 2px 2px;}
.tabs .active {height: 22px;margin-top: -2px;padding: 2px 5px 0 4px;background: #f0f0f0;}

.center {flex: 1;min-width: 0;display: flex;flex-direction: column;margin: 0 4px 0 6px;}
.view {flex: 1;min-height: 0;position: relative;border: 2px solid #6a6a6a;border-top-width: 3px;border-right-color: #888;border-bottom: 1px solid #ddd;background: #fff;overflow: hidden;}
.scene {position: absolute;width: 100%;height: 100%;}
.axis {font: 11px "Liberation Sans", sans-serif;}
.readout {position: absolute;top: 4px;left: 0;padding-left: 4px;font: 11px/14px "Liberation Sans", sans-serif;color: #000080;}
.readout.bottom {top: auto;bottom: 6px;}
.marked {width: 178px;height: 25px;margin: -3px 0 0 -4px;padding-left: 1px;border: 3px solid #c82020;background: #fff;}

/* edit bar */
.editbar {width: 200px;padding-right: 2px;background: linear-gradient(#fff, #fff) 0 18px no-repeat;}
.panels {flex: 1;display: flex;flex-direction: column;gap: 2px;padding: 3px 0 0 2px;}
.panel {min-height: 50px;border: 1px solid #c8cce0;background: #fafafd;}
.panel h3 {height: 18px;display: flex;align-items: center;justify-content: space-between;padding: 0 4px 0 3px;background: linear-gradient(#f7f8fc, #c8cddd);color: #4a5162;}
.panel h3::after {content: "";border: 4px solid transparent;border-top-color: #777;border-bottom: 0;}
.tools {display: flex;gap: 4px;padding: 4px;}
.tools button {width: 22px;height: 22px;display: flex;align-items: center;justify-content: center;border: 1px solid #c4c8dc;background: linear-gradient(#fff, #dcdfe8);}
.tools .on {border: 2px solid #0078d7;}
.tools.letters button {font: 14px/14px "Open Sans", sans-serif;color: #222;flex-direction: column;justify-content: flex-end;padding-bottom: 1px;}
.letters button::after {content: "";flex: none;width: 16px;height: 3px;background: #68b0e0;}
.letters.hot button::after {background: #f46a1c;}
.tools.letters .on {padding-bottom: 0;}
.letters small {font-size: 9px;}
.cmd {height: 19px;display: flex;align-items: center;gap: 5px;padding-left: 3px;}
.legend {display: flex;flex-direction: column;height: 229px;padding: 5px 0 0 56px;}
.unit {height: 20px;}
.scale {display: flex;width: 82px;justify-content: space-between;}
.swatches li {width: 40px;height: 12px;margin-top: 2px;border: 1px solid #c8cce0;}
.swatches {padding-top: 3px;}
.c1 {background: #c00000;}
.c2 {background: #ff0000;}
.c3 {background: #ff8000;}
.c4 {background: #d0d000;}
.c5 {background: #ffff00;}
.c6 {background: #00ff00;}
.c7 {background: #00e680;}
.c8 {background: #00f6f6;}
.c9 {background: #40b4ff;}
.c10 {background: #8080ff;}
.c11 {background: #0000e6;}
.values {text-align: right;line-height: 14px;margin-top: -2px;}
.legend dl {display: grid;grid-template-columns: 40px 42px;text-align: right;line-height: 13px;padding-top: 4px;}
.cmd input {appearance: none;width: 14px;height: 14px;margin: 0 1px;border: 1px solid #3c64b0;background: linear-gradient(135deg, #dcdcdc, #fff);}
.cmd input:checked::after {content: "✓";display: block;font: bold 12px/12px "DejaVu Sans", sans-serif;color: #108020;text-align: center;}

/* simulation parameters dialog */
.dialog {position: absolute;left: 394px;top: 155px;width: 490px;border: 1px solid #666;background: #f0f0f0;box-shadow: 0 4px 18px rgba(0,0,0,.35);}
.dialog-title {height: 31px;display: flex;align-items: center;padding: 0 10px 0 8px;background: #fff;font: 12px/16px Roboto, sans-serif;}
.dialog-title h2 {flex: 1;}
.dialog-title svg {width: 10px;height: 10px;display: block;}
.dialog-tabs {display: flex;align-items: flex-end;height: 27px;padding-left: 8px;}
.dialog-tabs button {height: 19px;padding: 0 3px;border: 1px solid #d9d9d9;border-bottom: 0;border-left: 0;}
.dialog-tabs button:first-child {border-left: 1px solid #d9d9d9;}
.dialog-tabs .active {height: 22px;margin-bottom: -1px;padding: 0 5px 2px;background: #fff;}
.dialog-tabs .last {padding: 0 14px 0 5px;}
.page {margin: 0 7px 0 6px;border: 1px solid #d9d9d9;background: #fff;padding: 8px 12px 12px 11px;}
.group {border: 1px solid #c0c4d8;}
.group legend {float: left;width: 100%;height: 15px;padding-left: 4px;line-height: 15px;border-bottom: 1px solid #b4b8cc;background: linear-gradient(#f8f9fc, #ccd0e0);color: #4a5162;}
.form {clear: both;display: grid;grid-template-columns: 95px 1fr;row-gap: 1px;align-items: center;padding: 7px 6px 4px 5px;}
.form select {appearance: none;height: 21px;padding-left: 4px;border: 1px solid #adadad;border-radius: 0;background: url('data:image/svg+xml,<svg xmlns="http://www.w3.org/2000/svg" width="10" height="6"><path d="M1 1l4 4 4-4" fill="none" stroke="%23444"/></svg>') right 3px center no-repeat, #e1e1e1;}
.radios {display: flex;gap: 32px;height: 22px;margin-left: -2px;}
.radios label {display: flex;align-items: center;gap: 2px;}
.radios input {appearance: none;width: 13px;height: 13px;border: 1px solid #333;border-radius: 50%;background: #fff;}
.radios input:checked {background: radial-gradient(#222 0 3px, #fff 4px);}
.cols {display: grid;grid-template-columns: 1fr 1fr;gap: 6px;margin-top: 6px;height: 361px;}
.rows {clear: both;display: flex;align-items: center;height: 38px;padding: 0 6px 0 5px;}
.rows label {flex: 1;}
.rows input {width: 47px;height: 20px;margin-right: 5px;padding-left: 5px;border: 1px solid #7a7a7a;}
.rows .btn {width: 61px;}
.btn {height: 22px;border: 1px solid #adadad;background: #e1e1e1;}
.btn:disabled {background: #ccc;border-color: #bfbfbf;color: #838383;}
.tablebox {display: flex;gap: 2px;height: 302px;padding-left: 6px;}
.tablewrap {width: 192px;background: #f0f0f0;border: 1px solid #c8cce0;border-right: 0;}
table {width: 191px;border-collapse: separate;border-spacing: 0;table-layout: fixed;background: #fff;}
tr {height: 18px;}
th, td {height: 18px;line-height: 17px;border: solid #c8cce0;border-width: 0 1px 1px 0;font-weight: normal;text-align: center;}
th {background: #f0f0f0;}
td {text-align: right;padding-right: 4px;}
.no {width: 42px;}
.sel {outline: 3px solid #c82020;outline-offset: -1px;}
.sel th {background: #d4dae8;color: #fff;border-right-color: #3a90f0;}
.sel td:last-child {background: #cce4fc;}
.scroll {width: 16px;display: flex;flex-direction: column;background: #f0f0f0;}
.scroll svg {height: 17px;flex: none;}
.thumb {height: 251px;background: #cdcdcd;}
.scroll svg:last-child {margin-top: auto;}
.chart {border: 1px solid #7a7a7a;}
.chart svg {display: block;width: 100%;}
.chart .ct {font-size: 16px;fill: #264a82;}
.chart .cl {font-size: 12px;fill: #264a82;}
.actions {display: grid;grid-template-columns: 108px 108px 91px 1fr;gap: 6px;padding: 9px 1px 0;}
.foot {display: flex;justify-content: flex-end;gap: 8px;padding: 8px 7px;}
.foot .btn {width: 73px;height: 21px;}
.foot .primary {border: 2px solid #0078d7;}

/* status bar */
.statusbar {height: 23px;flex: none;display: flex;justify-content: flex-end;border-top: 1px solid #d8d8d8;}
.statusbar span {border-left: 1px solid #d0d0d0;}
.w1 {width: 9px;}
.w2 {width: 83px;}
.w3 {width: 57px;}
.w4 {width: 69px;}
.w5 {width: 76px;background: radial-gradient(#a0a0a0 1px, transparent 1px) right 1px bottom 1px/9px 9px no-repeat;}
```
